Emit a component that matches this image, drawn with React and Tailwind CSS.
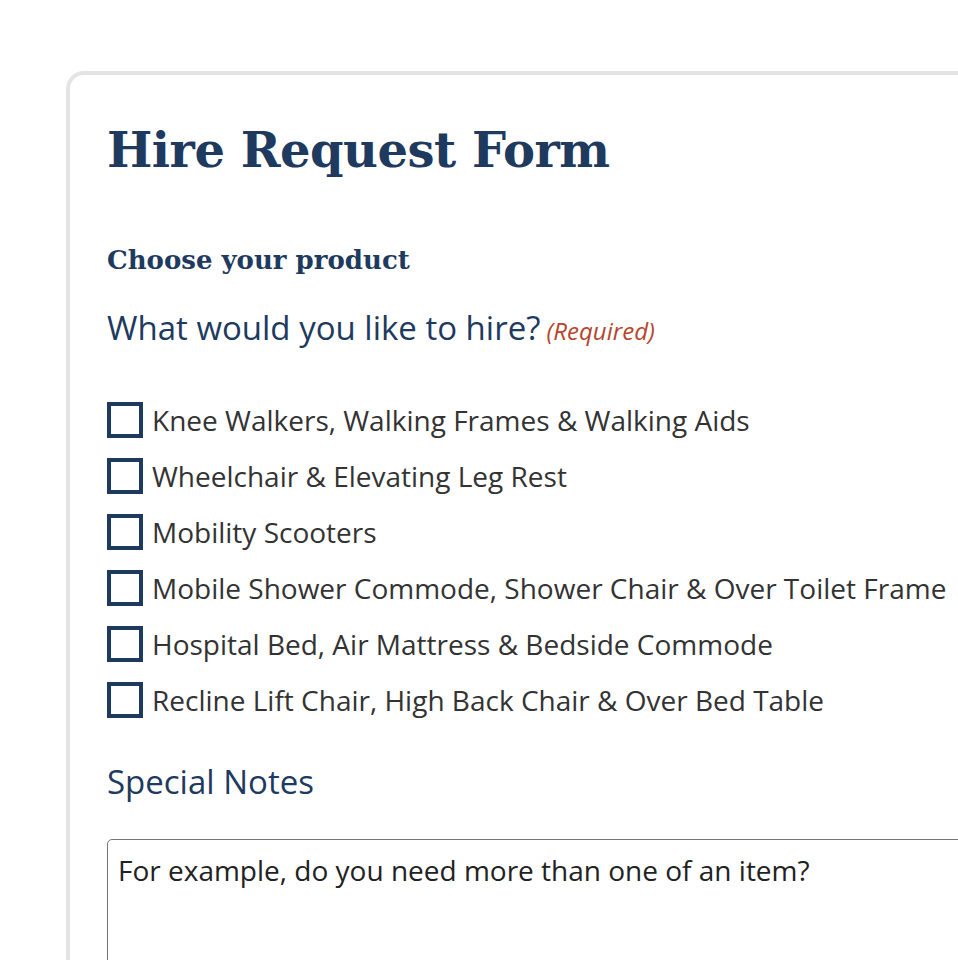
import React from "react";

const products = [
  "Knee Walkers, Walking Frames & Walking Aids",
  "Wheelchair & Elevating Leg Rest",
  "Mobility Scooters",
  "Mobile Shower Commode, Shower Chair & Over Toilet Frame",
  "Hospital Bed, Air Mattress & Bedside Commode",
  "Recline Lift Chair, High Back Chair & Over Bed Table",
];

const App = () => {
  return (
    <div className="h-screen w-full overflow-hidden bg-white">
      <div className="pl-[66px] pt-[71px]">
        {/* form card */}
        <div className="w-[1100px] h-[1000px] rounded-tl-[18px] border-[4px] border-[#e4e4e4] pl-[37px] pt-[45px]">
          <h1 className="font-['DejaVu_Serif',serif] font-bold text-[48px] tracking-[-0.5px] leading-[60px] text-[#1e3a5f]">
            Hire Request Form
          </h1>

          <h2 className="mt-[62px] font-['DejaVu_Serif',serif] font-bold text-[26px] leading-[36px] text-[#1e3a5f]">
            Choose your product
          </h2>

          <div className="mt-[30px] font-['Open_Sans',sans-serif] text-[33px] leading-[40px] text-[#1e3a5f]">
            What would you like to hire?
            <span className="ml-[6px] italic text-[24px] text-[#b5462d]">(Required)</span>
          </div>

          {/* product checkboxes */}
          <div className="mt-[41px] flex flex-col">
            {products.map((item, index) => (
              <label key={index} className="flex items-center h-[56px] gap-[9px]">
                <span className="w-[36px] h-[36px] shrink-0 border-[4px] border-[#1e3a5f] bg-white" />
                <span className="font-['Open_Sans',sans-serif] text-[28px] leading-[56px] text-[#333333] whitespace-nowrap">
                  {item}
                </span>
              </label>
            ))}
          </div>

          <div className="mt-[34px] font-['Open_Sans',sans-serif] text-[33px] leading-[40px] text-[#1e3a5f]">
            Special Notes
          </div>

          <textarea
            className="mt-[37px] block w-[1000px] h-[220px] resize-none rounded-[5px] border border-[#767676] px-[10px] pt-[12px] font-['Open_Sans',sans-serif] text-[28px] leading-[36px] text-[#222222] placeholder:text-[#222222] outline-none"
            placeholder="For example, do you need more than one of an item?"
          />
        </div>
      </div>
    </div>
  );
};

export default App;
